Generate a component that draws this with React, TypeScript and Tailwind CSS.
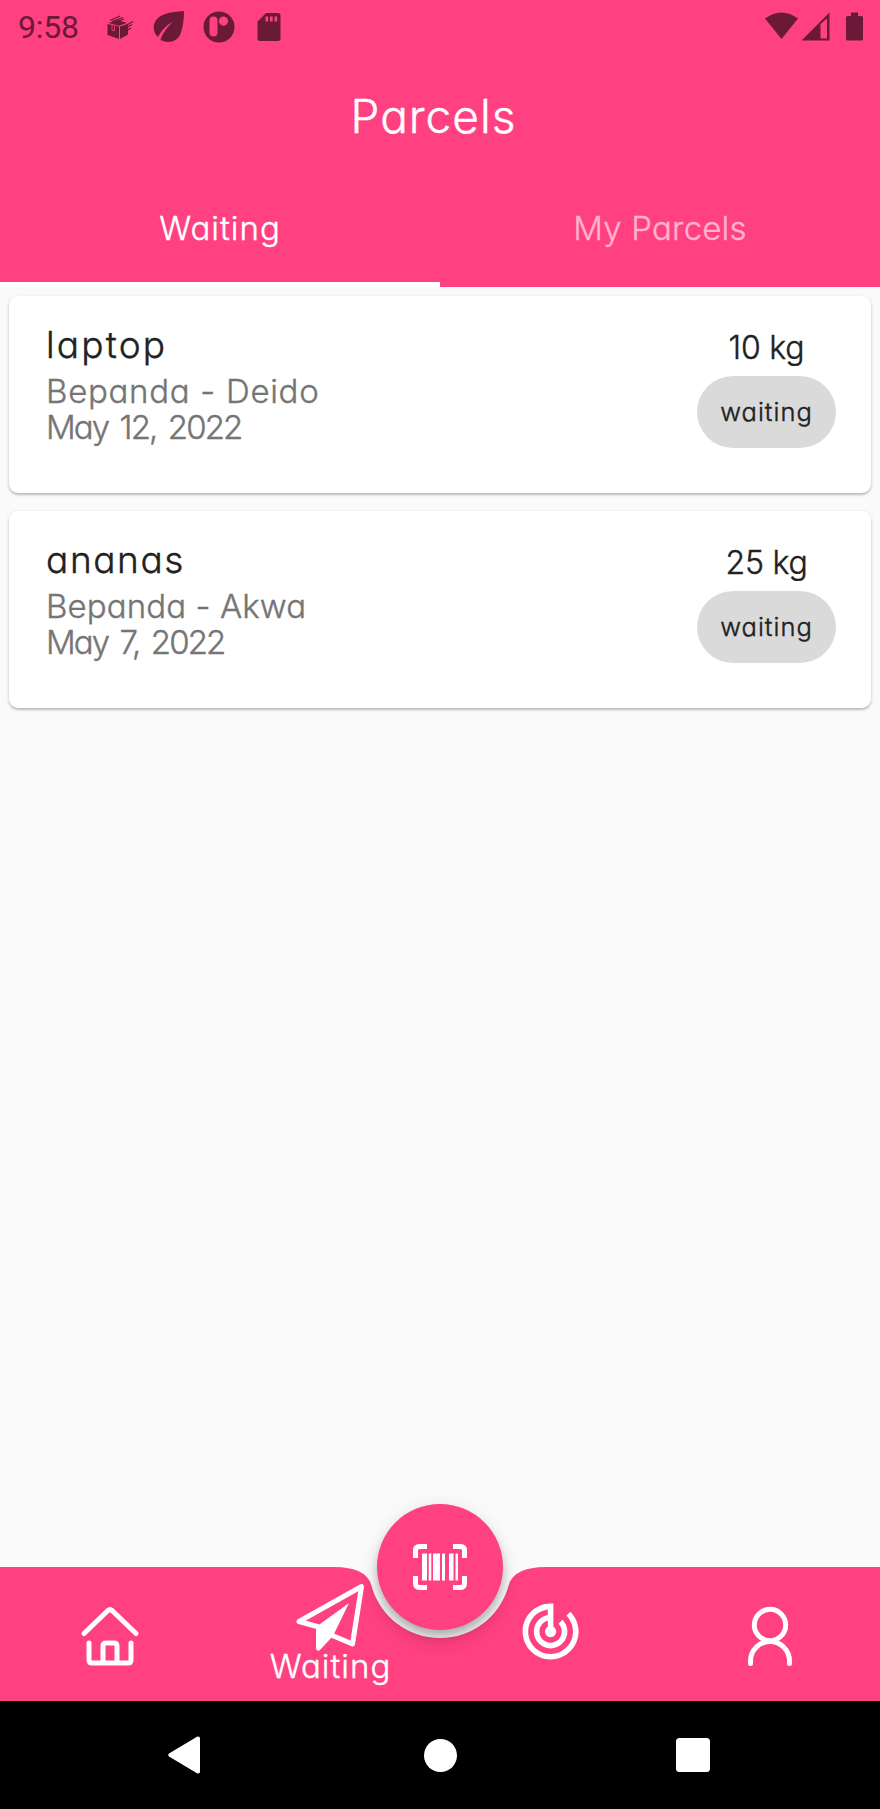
import type { ReactNode } from "react";

const comfy = "font-['Inter',sans-serif] [font-feature-settings:'cv11'] whitespace-nowrap";
const stroke = "font-light [-webkit-text-stroke:0.4px_currentColor]";

function StatusBar() {
  return (
    <div className="flex h-[54px] items-center justify-between pl-[18px] pr-[16px] text-[#6a1936]">
      <div className="flex items-center">
        <span className="w-[88px] font-['Roboto',sans-serif] text-[32px] leading-[56px] tracking-[-0.2px]">9:58</span>
        <svg width="28" height="28" viewBox="0 0 28 28" fill="currentColor">
          <path d="M1.500 11 13 13.500V26L1.500 22zM14 13.500 22 11V21.500L14 26z" />
          <path d="M2.500 10 12 7 21 10l-8 2.700z" />
          <path d="M4 7.500 14 3M6 8.500 17 4.500M9 9 18 6M20 12.500l7-4M19 15.500l7-4M20 18l5-3" stroke="currentColor" strokeWidth="1.300" />
          <path d="M6 12v5l2.500.8v-5" stroke="#ff4081" strokeWidth=".8" fill="none" />
        </svg>
        <svg className="ml-[19px]" width="32" height="32" viewBox="0 0 32 32" fill="currentColor">
          <path d="M31 0C17 1 5 3 1.500 12c-2 5.500 0 11 3.500 14C9 19 13 14.500 19.500 11 14 16.500 9.500 22 7.500 29c8 4 17 1.500 20-6C30 16 31 9 31 0z" />
        </svg>
        <svg className="ml-[18px]" width="32" height="32" viewBox="0 0 32 32" fill="currentColor">
          <path fillRule="evenodd" d="M16 .5a15.500 15.500 0 1 1 0 31 15.500 15.500 0 0 1 0-31zM10.500 5.500A4 4 0 0 0 6.500 9.500V21.500a4 4 0 0 0 8 0V9.500A4 4 0 0 0 10.500 5.500zM20.500 5.500a4.600 4.600 0 1 0 0 9.200 4.600 4.600 0 0 0 0-9.200z" />
        </svg>
        <svg className="ml-[22px]" width="24" height="30" viewBox="0 0 24 30" fill="currentColor">
          <path fillRule="evenodd" d="M9 1h12q2.500 0 2.500 2.500v23q0 2.500-2.500 2.500H3q-2.500 0-2.500-2.500V9.500zM8.500 4.500v5h2.700v-5zM13 4.500v5h2.700v-5zM17.500 4.500v5h2.700v-5z" />
        </svg>
      </div>
      <svg width="102" height="30" viewBox="0 0 102 30" fill="currentColor">
        <path d="M3 6.500Q19.500-5.500 36 6.500L19.500 27z" />
        <path fillRule="evenodd" d="M67.500.5V28.500H39.500zM58.500 12v14.500h6.500V6.500z" />
        <path d="M89 .5h7v3.500h3.500q1.500 0 1.500 1.500V27q0 1.500-1.500 1.500h-14Q84 28.500 84 27V5.500Q84 4 85.500 4H89z" />
      </svg>
    </div>
  );
}

type Parcel = { name: string; nameClass: string; route: string; routeClass: string; date: string; weight: string };

const parcels: Parcel[] = [
  { name: "laptop", nameClass: "tracking-[2.2px]", route: "Bepanda - Deido", routeClass: "tracking-[0.7px]", date: "May 12, 2022", weight: "10 kg" },
  { name: "ananas", nameClass: "tracking-[1.6px]", route: "Bepanda - Akwa", routeClass: "tracking-[0.1px]", date: "May 7, 2022", weight: "25 kg" },
];

function ParcelCard({ parcel }: { parcel: Parcel }) {
  return (
    <article className={`${comfy} ${stroke} flex h-[197px] justify-between rounded-[9px] bg-white pl-[37px] pr-[35px] shadow-[0_2px_2px_rgba(0,0,0,0.18),0_1px_4px_rgba(0,0,0,0.12)]`}>
      <div className="pt-[29px] text-[#757575]">
        <h2 className={`text-[37px] leading-[40px] text-[#212121] ${parcel.nameClass}`}>{parcel.name}</h2>
        <p className={`mt-[8px] text-[33px] leading-[36px] ${parcel.routeClass}`}>{parcel.route}</p>
        <p className="text-[33px] leading-[36px] tracking-[-1.9px] [word-spacing:4px]">{parcel.date}</p>
      </div>
      <div className="flex w-[139px] flex-col items-center pt-[32px] text-[#212121]">
        <span className="text-[32px] leading-[40px] tracking-[-0.2px]">{parcel.weight}</span>
        <span className="mt-[8px] flex h-[72px] w-[139px] items-center justify-center rounded-full bg-[#dadada] text-[25.500px] leading-[32px] tracking-[1px]">waiting</span>
      </div>
    </article>
  );
}

function NavItem({ children }: { children: ReactNode }) {
  return <button className="flex h-full flex-col items-center text-white">{children}</button>;
}

function BottomNav() {
  return (
    <nav className="relative h-[134px] text-white">
      <svg className="absolute inset-0" width="880" height="134" viewBox="0 0 880 134">
        <path fill="#ff4081" d="M0 0H334Q366 0 371.300 18A71 71 0 0 0 508.700 18Q514 0 546 0H880V134H0z" />
      </svg>
      <button className="absolute left-[377px] top-[-63px] flex size-[126px] items-center justify-center rounded-full bg-[#ff4081] shadow-[0_6px_8px_-1px_rgba(0,0,0,0.2),0_12px_18px_rgba(0,0,0,0.11),0_2px_20px_rgba(0,0,0,0.07)]">
        <svg width="54" height="46" viewBox="0 0 54 46" fill="white">
          <path fill="none" stroke="white" strokeWidth="5" d="M2.500 14V6.500q0-4 4-4H14M40 2.500h7.500q4 0 4 4V14M51.500 32v7.500q0 4-4 4H40M14 43.500H6.500q-4 0-4-4V32" />
          <path d="M9 9.500h5v27H9zM15.700 9.500h2.600v27h-2.600zM20 9.500h7v27h-7zM29 9.500h3v27h-3zM36 9.500h4.500v27H36zM42.500 9.500H45v27h-2.500z" />
        </svg>
      </button>
      <div className="relative grid h-full grid-cols-4 pointer-events-none">
        <NavItem>
          <svg className="mt-[38px]" width="64" height="64" viewBox="0 0 64 64" fill="none" stroke="white" strokeWidth="5" strokeLinecap="round" strokeLinejoin="round">
            <path d="M6 28.500 30 5.500q2-1.700 4 0L58 28.500" />
            <path d="M11 38V55q0 3 3 3H50q3 0 3-3V38" />
            <path d="M25 57V41q0-3 3-3h8q3 0 3 3V57" />
          </svg>
        </NavItem>
        <NavItem>
          <svg className="mt-[16px]" width="72" height="70" viewBox="0 0 72 70" fill="none" stroke="white" strokeWidth="5" strokeLinejoin="round">
            <path d="M25 44 5 38.500 67.500 3.500 58.500 61 36 51.500" />
            <path fill="white" stroke="none" d="M55 20 22 44V65q0 3 3.500 2.500L39 53z" />
          </svg>
          <span className={`${comfy} ${stroke} -mt-[6px] pl-[1px] text-[33px] leading-[38px] tracking-[1px]`}>Waiting</span>
        </NavItem>
        <NavItem>
          <svg className="ml-[1px] mt-[31px]" width="67.200" height="67.200" viewBox="0 0 24 24" fill="white">
            <path d="M19.070 4.930l-1.410 1.410C19.100 7.790 20 9.790 20 12c0 4.420-3.580 8-8 8s-8-3.580-8-8c0-4.080 3.050-7.440 7-7.930v2.020C8.160 6.570 6 9.030 6 12c0 3.310 2.690 6 6 6s6-2.690 6-6c0-1.660-.67-3.160-1.760-4.240l-1.410 1.410C15.550 9.900 16 10.900 16 12c0 2.210-1.790 4-4 4s-4-1.790-4-4c0-1.860 1.280-3.410 3-3.860v2.140c-.6.35-1 .98-1 1.720 0 1.100.9 2 2 2s2-.9 2-2c0-.74-.4-1.380-1-1.720V2h-1C6.480 2 2 6.480 2 12s4.480 10 10 10 10-4.480 10-10c0-2.760-1.120-5.260-2.930-7.070z" />
          </svg>
        </NavItem>
        <NavItem>
          <svg className="mt-[38px]" width="50" height="64" viewBox="0 0 50 64" fill="none" stroke="white" strokeWidth="5" strokeLinecap="round">
            <circle cx="25" cy="20" r="15.700" />
            <path d="M5.500 58.500V56a19.500 19.500 0 0 1 39 0V58.500" />
          </svg>
        </NavItem>
      </div>
    </nav>
  );
}

export default function App() {
  return (
    <div className="flex h-[1809px] w-[880px] flex-col overflow-hidden bg-[#fafafa]">
      <header className={`${comfy} flex h-[287px] flex-col bg-[#ff4081] text-white`}>
        <StatusBar />
        <h1 className={`${stroke} flex h-[123px] items-start justify-center pr-[13px] pt-[32px] text-[46px] leading-[60px] tracking-[1px]`}>Parcels</h1>
        <div className={`${stroke} grid flex-1 grid-cols-2 text-[33px] leading-[40px]`}>
          <button className="flex items-start justify-center border-b-[5px] border-white pt-[31px] tracking-[1px]">Waiting</button>
          <button className="flex items-start justify-center pt-[31px] tracking-[0.2px] text-[#ffb3cd]">My Parcels</button>
        </div>
      </header>
      <main className="flex flex-1 flex-col gap-[18px] px-[9px] pt-[9px]">
        {parcels.map((parcel) => (
          <ParcelCard key={parcel.name} parcel={parcel} />
        ))}
      </main>
      <BottomNav />
      <div className="flex h-[108px] items-center justify-between bg-black pl-[168px] pr-[170px]">
        <svg width="32" height="38" viewBox="0 0 32 38" fill="white">
          <path d="M1 17.500 29 .8Q32 0 32 2.500V35.500Q32 38 29 37.200L1 20.500Q-.5 19 1 17.500z" />
        </svg>
        <svg className="ml-[4px]" width="33" height="33" viewBox="0 0 33 33" fill="white">
          <circle cx="16.500" cy="16.500" r="16.500" />
        </svg>
        <svg width="34" height="34" viewBox="0 0 34 34" fill="white">
          <rect width="34" height="34" rx="3.500" />
        </svg>
      </div>
    </div>
  );
}
